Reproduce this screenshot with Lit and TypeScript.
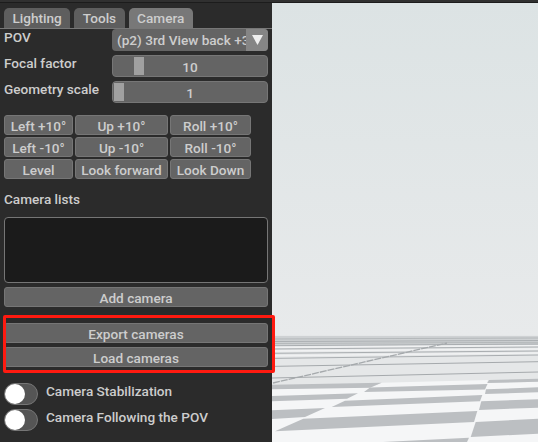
import { LitElement, css, html, svg } from "lit";
import { customElement, state } from "lit/decorators.js";
import { classMap } from "lit/directives/class-map.js";

const BUTTONS = [
	["Left +10°", "Up +10°", "Roll +10°"],
	["Left -10°", "Up -10°", "Roll -10°"],
	["Level", "Look forward", "Look Down"],
];

// floor tiles, in page coordinates
const TILES = [
	"272,384.7 381.7,382.7 370,387.7 272,389.3",
	"370,387.5 487.5,384 485,389.5 364,392",
	"272,396 358,393.3 347,398.7 272,401.3",
	"345,400.7 482.3,395 480,401.3 331.7,407",
	"272,410.3 325,408 305,417 272,419",
	"303.3,418.7 477.3,411 474,422 275,431.3",
	"489,380 538,378.7 538,381.7 487.3,383",
	"486,389.3 538,387.3 538,392.3 485,394",
	"481.3,401.3 538,399.3 538,407.7 479,410",
	"475.7,422 538,418.7 538,433.7 470.7,437",
	"383,442 469,437.7 467,442",
];

const LINES = [
	[272, 339, 538, 338, 1, "#b4b8ba"],
	[272, 341.5, 538, 340.5, 1, "#abafb2"],
	[272, 343.5, 538, 342.3, 1, "#b4b8ba"],
	[272, 345.7, 538, 344, 1, "#a9adb0"],
	[272, 347.4, 538, 345.6, 1.2, "#f1f2f3"],
	[272, 349, 538, 347, 1, "#a9adb0"],
	[272, 351, 538, 349, 1.5, "#f1f2f3"],
	[272, 353.3, 538, 351, 1, "#a9adb0"],
	[272, 355.8, 538, 353, 1.5, "#f0f1f2"],
	[272, 358.4, 538, 355, 1, "#a9adb0"],
	[272, 366.4, 538, 361.7, 1, "#a5a9ac"],
	[272, 378, 538, 372, 1, "#a5a9ac"],
];

@customElement("app-root")
export class AppRoot extends LitElement {
	@state() tab = "Camera";

	static styles = css`
		:host {
			display: block;
			position: relative;
			width: 538px;
			height: 442px;
			overflow: hidden;
			font-family: Roboto, sans-serif;
			font-size: 13.6px;
			font-weight: 500;
			color: #cdcdcd;
			background: #2b2b2b;
		}
		.top {
			height: 3px;
			box-sizing: border-box;
			background: #303030;
			border-bottom: 1px solid #1c1c1c;
		}
		.main {
			display: flex;
			height: 439px;
		}
		.panel {
			width: 272px;
			flex: none;
			box-sizing: border-box;
			padding: 5px 4px 0;
			background: #2b2b2b;
		}
		.tabs {
			display: flex;
			gap: 4px;
			height: 20px;
			border-bottom: 1px solid #777;
			margin: 0 -4px;
			padding: 0 4px;
		}
		.tab {
			display: flex;
			align-items: center;
			justify-content: center;
			padding: 0 8.5px;
			border-radius: 5px 5px 0 0;
			background: #5e5e5e;
		}
		.tab.on {
			background: #787878;
		}
		.row {
			display: grid;
			grid-template-columns: 108px 156px;
			height: 22px;
			margin-bottom: 4px;
		}
		.row label {
			line-height: 14px;
			padding-top: 1px;
		}
		.field {
			position: relative;
			display: flex;
			align-items: center;
			justify-content: center;
			box-sizing: border-box;
			padding-top: 1px;
			border-radius: 4px;
			background: #646464;
			border: 1px solid #767676;
			overflow: hidden;
		}
		.select {
			justify-content: flex-start;
			padding: 0 0 0 5px;
			border: none;
			white-space: nowrap;
		}
		.arrow {
			position: absolute;
			right: 0;
			top: 0;
			bottom: 0;
			width: 22px;
			display: flex;
			align-items: center;
			justify-content: center;
			background: #858585;
		}
		.grab {
			position: absolute;
			top: 1px;
			bottom: 1px;
			width: 10px;
			background: #a0a0a0;
		}
		.value {
			position: relative;
		}
		.grid {
			display: grid;
			grid-template-columns: 69px 93px 81px;
			grid-auto-rows: 20px;
			gap: 2px;
			margin-top: 12px;
		}
		.btn {
			display: flex;
			align-items: center;
			justify-content: center;
			box-sizing: border-box;
			height: 20px;
			padding-top: 1px;
			border-radius: 3px;
			background: #646464;
			border: 1px solid #767676;
			white-space: nowrap;
		}
		.heading {
			height: 36px;
			padding-top: 2px;
			display: flex;
			align-items: center;
		}
		.list {
			height: 66px;
			box-sizing: border-box;
			border: 1px solid #767676;
			border-radius: 4px;
			background: #1b1b1b;
			margin-bottom: 4px;
		}
		.wide {
			margin-bottom: 4px;
		}
		.wide.add {
			margin-bottom: 16px;
		}
		.toggles {
			margin-top: 16px;
			display: grid;
			row-gap: 4px;
		}
		.toggle {
			display: flex;
			gap: 8px;
			height: 22px;
		}
		.toggle span {
			line-height: 16px;
		}
		.switch {
			position: relative;
			width: 34px;
			height: 22px;
			box-sizing: border-box;
			border-radius: 11px;
			border: 1px solid #767676;
			background: #555;
		}
		.knob {
			position: absolute;
			left: 0;
			top: 0;
			width: 20px;
			height: 20px;
			border-radius: 50%;
			background: #fff;
		}
		.view {
			flex: 1;
			background: linear-gradient(#dce3e4, #e8eaeb 76%);
		}
		.view svg {
			display: block;
		}
		.mark {
			position: absolute;
			left: 3px;
			top: 315px;
			width: 272px;
			height: 58px;
			box-sizing: border-box;
			border: 3px solid #ff1a10;
			border-radius: 2px;
		}
	`;

	slider(label: string, value: string, left: number) {
		return html`<div class="row">
			<label>${label}</label>
			<div class="field">
				<div class="grab" style="left:${left}px"></div>
				<span class="value">${value}</span>
			</div>
		</div>`;
	}

	toggle(label: string) {
		return html`<div class="toggle">
			<div class="switch"><div class="knob"></div></div>
			<span>${label}</span>
		</div>`;
	}

	floor() {
		return svg`
			<rect x="272" y="335" width="266" height="50" fill="#e5e7e8"></rect>
			<rect x="272" y="336" width="266" height="9" fill="#ced1d3"></rect>
			<polygon points="272,389 370,387.7 381.7,382.7 488,380 487,383 538,381.7 538,442 272,442" fill="#f5f6f7"></polygon>
			${TILES.map((p) => svg`<polygon points=${p} fill="#bcbfc2"></polygon>`)}
			${LINES.map(
				([x1, y1, x2, y2, w, c]) =>
					svg`<line x1=${x1} y1=${y1} x2=${x2} y2=${y2} stroke=${c} stroke-width=${w}></line>`
			)}
			<line x1="273" y1="383" x2="447" y2="343" stroke="#a5a9ac" stroke-width="1.3" stroke-dasharray="7 1"></line>
		`;
	}

	render() {
		return html`
			<div class="top"></div>
			<div class="main">
				<div class="panel">
					<div class="tabs">
						${["Lighting", "Tools", "Camera"].map(
							(t) => html`<div class="${classMap({ tab: true, on: t === this.tab })}">${t}</div>`
						)}
					</div>
					<div class="row">
						<label>POV</label>
						<div class="field select">
							(p2) 3rd View back +30
							<div class="arrow">
								<svg width="11" height="10" viewBox="0 0 11 10"><path d="M0 0h11L5.5 10z" fill="#eee"></path></svg>
							</div>
						</div>
					</div>
					${this.slider("Focal factor", "10", 21)} ${this.slider("Geometry scale", "1", 1)}
					<div class="grid">
						${BUTTONS.flat().map((b) => html`<div class="btn">${b}</div>`)}
					</div>
					<div class="heading">Camera lists</div>
					<div class="list"></div>
					<div class="btn wide add">Add camera</div>
					<div class="btn wide">Export cameras</div>
					<div class="btn wide">Load cameras</div>
					<div class="toggles">
						${this.toggle("Camera Stabilization")} ${this.toggle("Camera Following the POV")}
					</div>
				</div>
				<div class="view">
					<svg width="266" height="439" viewBox="272 3 266 439">${this.floor()}</svg>
				</div>
			</div>
			<div class="mark"></div>
		`;
	}
}
